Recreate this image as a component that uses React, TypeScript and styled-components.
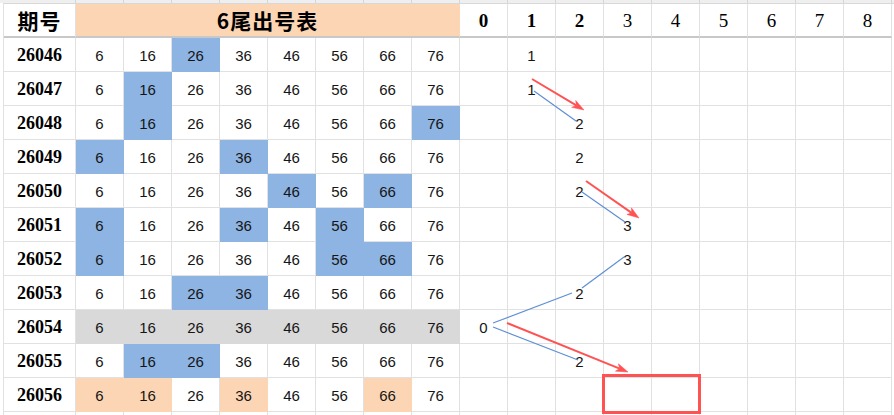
import React from 'react'
import styled, { createGlobalStyle } from 'styled-components'

const GlobalStyle = createGlobalStyle`
  html, body {
    margin: 0;
    padding: 0;
    background: #fff;
  }
  body {
    font-family: 'Liberation Sans', 'Noto Sans CJK SC', sans-serif;
  }
`

const LINE = '#e1e1e1'
const FILLS: Record<string, string> = {
  B: '#8db4e2',
  G: '#d9d9d9',
  O: '#fcd5b4'
}

const Sheet = styled.div`
  position: relative;
  width: 894px;
  height: 415px;
  overflow: hidden;
  background: #fff;
`

const Strip = styled.div`
  display: grid;
  grid-template-columns: 76px repeat(17, 48px);
  height: 3px;
  background: #efefef;
`

const StripCell = styled.div`
  border-right: 1px solid #d6d6d6;
`

const Grid = styled.div`
  display: grid;
  grid-template-columns: 72px repeat(17, 48px);
  grid-template-rows: 34px;
  grid-auto-rows: 34px;
  margin-left: 3px;
  border-left: 1px solid ${LINE};
  border-top: 1px solid #d8d8d8;
`

const Cell = styled.div<{ $fill?: string }>`
  box-sizing: border-box;
  display: flex;
  align-items: center;
  justify-content: center;
  background: ${(p) => p.$fill ?? '#fff'};
  border-right: 1px solid ${(p) => (p.$fill ? 'transparent' : LINE)};
  border-bottom: 1px solid ${(p) => (p.$fill ? 'transparent' : LINE)};
  font-size: 15px;
  color: #151515;
  padding-top: 1px;
`

const HeadCell = styled(Cell)<{ $span?: number; $bold?: boolean }>`
  grid-column: span ${(p) => p.$span ?? 1};
  border-bottom: 2px solid #c8c8c8;
  font-family: 'Liberation Serif', serif;
  font-weight: ${(p) => (p.$bold ? 700 : 400)};
  font-size: 19px;
  color: #000;
`

const HeadTitle = styled(HeadCell)`
  font-family: 'Noto Sans CJK SC', sans-serif;
  font-weight: 700;
  font-size: 21px;
  letter-spacing: 1px;
  padding-top: 0;
  padding-bottom: 1px;
`

const Label = styled(Cell)`
  font-family: 'Liberation Serif', serif;
  font-weight: 700;
  font-size: 18px;
  color: #000;
`

const Mark = styled.div`
  position: absolute;
  left: 602px;
  top: 374px;
  width: 99px;
  height: 40px;
  box-sizing: border-box;
  border: 3px solid #ff5252;
`

const Overlay = styled.svg`
  position: absolute;
  left: 0;
  top: 0;
  pointer-events: none;
`

const rows = [
  { id: '26046', fill: '..B.....', hit: 1 },
  { id: '26047', fill: '.B......', hit: 1 },
  { id: '26048', fill: '.B.....B', hit: 2 },
  { id: '26049', fill: 'B..B....', hit: 2 },
  { id: '26050', fill: '....B.B.', hit: 2 },
  { id: '26051', fill: 'B..B.B..', hit: 3 },
  { id: '26052', fill: 'B....BB.', hit: 3 },
  { id: '26053', fill: '..BB....', hit: 2 },
  { id: '26054', fill: 'GGGGGGGG', hit: 0 },
  { id: '26055', fill: '.BB.....', hit: 2 },
  { id: '26056', fill: 'OO.O..O.', hit: -1 }
]

const tails = [6, 16, 26, 36, 46, 56, 66, 76]
const digits = [0, 1, 2, 3, 4, 5, 6, 7, 8]

// 连线（蓝）
const links = [
  [534, 91, 576, 121],
  [582, 192, 625, 222],
  [624, 257, 582, 288],
  [572, 293, 493, 323],
  [493, 327, 578, 360]
]

// 红色箭头
const arrows = [
  [532, 79, 584, 110],
  [586, 181, 639, 218],
  [507, 323, 628, 372]
]

function arrowParts(x1: number, y1: number, x2: number, y2: number) {
  const len = 12
  const half = 4
  const d = Math.hypot(x2 - x1, y2 - y1)
  const ux = (x2 - x1) / d
  const uy = (y2 - y1) / d
  const bx = x2 - ux * len
  const by = y2 - uy * len
  const nx = -uy
  const ny = ux
  return {
    end: [bx + ux * 3, by + uy * 3],
    points: `${x2},${y2} ${bx + nx * half},${by + ny * half} ${bx + ux * 3},${by + uy * 3} ${bx - nx * half},${by - ny * half}`
  }
}

export default function App() {
  return (
    <Sheet>
      <GlobalStyle />
      <Strip>
        {Array.from({ length: 18 }).map((_, i) => (
          <StripCell key={i} />
        ))}
      </Strip>
      <Grid>
        <HeadTitle>期号</HeadTitle>
        <HeadTitle $span={8} $fill={FILLS.O} style={{ borderBottomColor: '#c8c8c8' }}>
          6尾出号表
        </HeadTitle>
        {digits.map((d) => (
          <HeadCell key={d} $bold={d < 3}>
            {d}
          </HeadCell>
        ))}

        {rows.map((row) => (
          <React.Fragment key={row.id}>
            <Label>{row.id}</Label>
            {tails.map((t, i) => (
              <Cell key={t} $fill={FILLS[row.fill[i]]}>
                {t}
              </Cell>
            ))}
            {digits.map((d) => (
              <Cell key={d}>{row.hit === d ? d : ''}</Cell>
            ))}
          </React.Fragment>
        ))}
        {Array.from({ length: 18 }).map((_, i) => (
          <Cell key={`e${i}`} />
        ))}
      </Grid>

      <Overlay width={894} height={415} viewBox="0 0 894 415">
        {links.map(([x1, y1, x2, y2], i) => (
          <line key={i} x1={x1} y1={y1} x2={x2} y2={y2} stroke="#5f8fd6" strokeWidth={1.2} />
        ))}
        {arrows.map(([x1, y1, x2, y2], i) => {
          const a = arrowParts(x1, y1, x2, y2)
          return (
            <g key={i} fill="#ff5252" stroke="#ff5252">
              <line x1={x1} y1={y1} x2={a.end[0]} y2={a.end[1]} strokeWidth={2} />
              <polygon points={a.points} strokeWidth={0.5} strokeLinejoin="round" />
            </g>
          )
        })}
      </Overlay>
      <Mark />
    </Sheet>
  )
}
